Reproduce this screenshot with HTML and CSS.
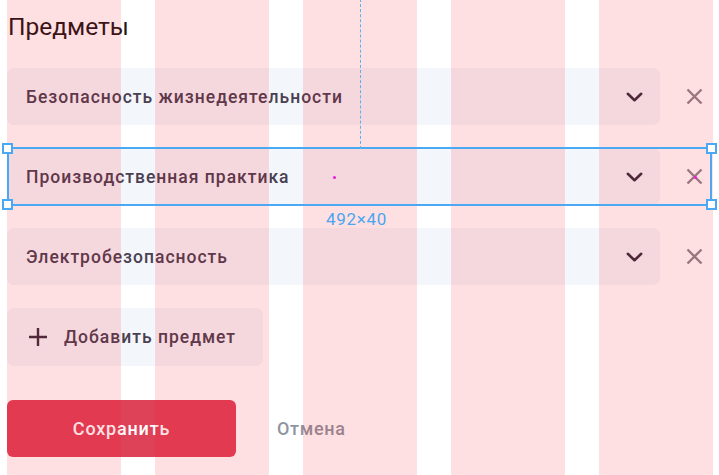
FILE: index.html
```html
<!DOCTYPE html>
<html lang="ru">
<head>
<meta charset="utf-8">
<link rel="stylesheet" href="styles.css">
</head>
<body>
<div class="page">
  <h1 class="title">Предметы</h1>

  <div class="row">
    <div class="select">
      <span class="select-text">Безопасность жизнедеятельности</span>
      <svg class="chevron" width="17" height="10" viewBox="0 0 17 10"><path d="M1.8 1.8 L8.5 8.2 L15.2 1.8" fill="none" stroke="#3b2f40" stroke-width="2.6" stroke-linecap="round" stroke-linejoin="round"/></svg>
    </div>
    <button class="remove" type="button"><svg width="17" height="17" viewBox="0 0 17 17"><path d="M1.5 1.5 L15.5 15.5 M15.5 1.5 L1.5 15.5" fill="none" stroke="#8d8690" stroke-width="2.4"/></svg></button>
  </div>

  <div class="row row-selected">
    <div class="select">
      <span class="select-text">Производственная практика</span>
      <svg class="chevron" width="17" height="10" viewBox="0 0 17 10"><path d="M1.8 1.8 L8.5 8.2 L15.2 1.8" fill="none" stroke="#3b2f40" stroke-width="2.6" stroke-linecap="round" stroke-linejoin="round"/></svg>
    </div>
    <button class="remove" type="button"><svg width="17" height="17" viewBox="0 0 17 17"><path d="M1.5 1.5 L15.5 15.5 M15.5 1.5 L1.5 15.5" fill="none" stroke="#8d8690" stroke-width="2.4"/></svg></button>
    <div class="selection">
      <span class="guide"></span>
      <span class="handle h-tl"></span>
      <span class="handle h-bl"></span>
      <span class="handle h-tr"></span>
      <span class="handle h-br"></span>
      <span class="dot dot-a"></span>
      <span class="dot dot-b"></span>
      <span class="size-label">492×40</span>
    </div>
  </div>

  <div class="row">
    <div class="select">
      <span class="select-text">Электробезопасность</span>
      <svg class="chevron" width="17" height="10" viewBox="0 0 17 10"><path d="M1.8 1.8 L8.5 8.2 L15.2 1.8" fill="none" stroke="#3b2f40" stroke-width="2.6" stroke-linecap="round" stroke-linejoin="round"/></svg>
    </div>
    <button class="remove" type="button"><svg width="17" height="17" viewBox="0 0 17 17"><path d="M1.5 1.5 L15.5 15.5 M15.5 1.5 L1.5 15.5" fill="none" stroke="#8d8690" stroke-width="2.4"/></svg></button>
  </div>

  <button class="add" type="button">
    <svg width="20" height="20" viewBox="0 0 20 20"><path d="M10 1 V19 M1 10 H19" fill="none" stroke="#3b2f40" stroke-width="2.4"/></svg>
    <span>Добавить предмет</span>
  </button>

  <div class="actions">
    <button class="save" type="button">Сохранить</button>
    <button class="cancel" type="button">Отмена</button>
  </div>
</div>

<div class="grid-overlay">
  <span></span><span></span><span></span><span></span><span></span>
</div>
</body>
</html>
```

FILE: styles.css
```css
* { box-sizing: border-box; }

html, body {
  margin: 0;
  padding: 0;
  background: #ffffff;
}

body {
  font-family: Roboto, "Noto Sans", "Liberation Sans", sans-serif;
  width: 719px;
  height: 475px;
  overflow: hidden;
  position: relative;
}

.page {
  padding: 12px 7px 0 7px;
  width: 719px;
}

.title {
  margin: 0 0 26px 1px;
  font-size: 24.5px;
  line-height: 30px;
  font-weight: 400;
  color: #1f1719;
}

.row {
  display: flex;
  align-items: center;
  width: 705px;
  height: 57px;
  margin-bottom: 23px;
  position: relative;
}

.select {
  width: 653px;
  height: 57px;
  background: #f3f6fa;
  border-radius: 7px;
  display: flex;
  align-items: center;
  justify-content: space-between;
  padding: 0 17px 0 19px;
}

.select-text {
  font-size: 17.5px;
  font-weight: 500;
  letter-spacing: 1px;
  color: #4a4052;
}

.chevron { display: block; }

.remove {
  border: 0;
  background: transparent;
  padding: 0;
  margin-left: 26px;
  width: 17px;
  height: 17px;
  display: flex;
}

.remove svg { display: block; }

.selection {
  position: absolute;
  left: 0;
  right: 0;
  top: -1px;
  bottom: -1px;
  border: 2px solid #4aa9f2;
  z-index: 3;
}

.guide {
  position: absolute;
  left: 351px;
  bottom: 100%;
  height: 150px;
  width: 0;
  border-left: 1.5px dashed #58b2f2;
}

.handle {
  position: absolute;
  width: 11px;
  height: 11px;
  background: #ffffff;
  border: 2px solid #4aa9f2;
}
.h-tl { left: -7px; top: -6px; }
.h-bl { left: -7px; bottom: -6px; }
.h-tr { right: -7px; top: -6px; }
.h-br { right: -7px; bottom: -6px; }

.dot {
  position: absolute;
  width: 3px;
  height: 3px;
  border-radius: 50%;
  background: #f01ad8;
  top: 27px;
}
.dot-a { left: 324px; }
.dot-b { left: 685px; }

.size-label {
  position: absolute;
  top: 100%;
  left: 317px;
  margin-top: 5px;
  font-size: 17px;
  line-height: 20px;
  letter-spacing: 0.7px;
  color: #4aa6ef;
}

.add {
  display: flex;
  align-items: center;
  gap: 16px;
  width: 256px;
  height: 58px;
  border: 0;
  border-radius: 7px;
  background: #f3f6fa;
  padding: 0 0 0 21px;
  font-family: inherit;
  font-size: 17.5px;
  font-weight: 500;
  letter-spacing: 1px;
  color: #4a4052;
  margin-top: 0;
}

.add svg { display: block; }

.actions {
  display: flex;
  align-items: center;
  gap: 41px;
  margin-top: 34px;
}

.save {
  width: 229px;
  height: 57px;
  border: 0;
  border-radius: 6px;
  background: #de4259;
  color: #ffffff;
  font-family: inherit;
  font-size: 18px;
  font-weight: 500;
  letter-spacing: 0.8px;
}

.cancel {
  border: 0;
  background: transparent;
  padding: 0;
  font-family: inherit;
  font-size: 18px;
  font-weight: 500;
  letter-spacing: 0.7px;
  color: #8d95a1;
}

.grid-overlay {
  position: absolute;
  inset: 0;
  padding-left: 7px;
  display: grid;
  grid-template-columns: repeat(5, 114px);
  column-gap: 34px;
  pointer-events: none;
  z-index: 2;
}

.grid-overlay span {
  background: rgba(255, 0, 16, 0.12);
}
```
